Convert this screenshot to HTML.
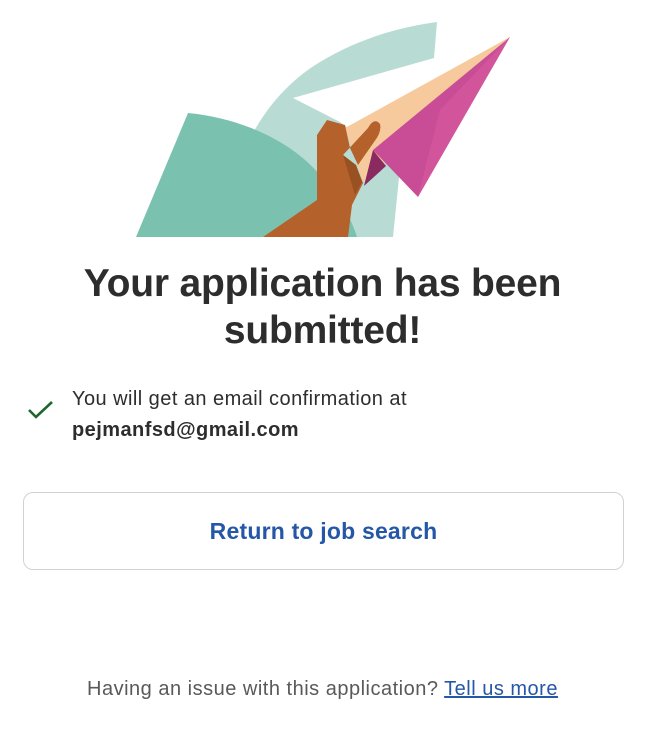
<!DOCTYPE html>
<html><head><meta charset="utf-8"><style>
body{margin:0;width:645px;height:736px;background:#fff;font-family:"Liberation Sans",sans-serif;position:relative;overflow:hidden}
svg.ill{position:absolute;left:0;top:0}
h1{position:absolute;left:0;width:645px;top:260px;margin:0;text-align:center;font-size:39px;line-height:47px;font-weight:bold;color:#2d2d2d;letter-spacing:-0.2px}
.chk{position:absolute;left:27px;top:399px}
.msg{position:absolute;left:72px;top:384px;font-size:20px;line-height:31px;color:#2d2d2d;letter-spacing:0.45px}
.btn{position:absolute;left:23px;top:492px;width:601px;height:78px;border:1px solid #d4d2d0;border-radius:10px;box-sizing:border-box;text-align:center;line-height:76px;font-size:23px;font-weight:bold;color:#2557a7;letter-spacing:0.2px}
.foot{position:absolute;left:0;width:645px;top:678px;text-align:center;font-size:20px;color:#595959;letter-spacing:0.5px}
.foot a{color:#2557a7;text-decoration:underline}
</style></head><body>
<svg class="ill" width="645" height="240" viewBox="0 0 645 240">
<path d="M437,22 L434,58 L293,98 L340,122 L400,168 L393,237 L225,237 C228,160 265,95 320,62 C360,38 400,27 437,22Z" fill="#b8dcd3"/>
<path d="M136,237 L188,113 C240,118 290,140 320,175 C338,196 350,215 357,237Z" fill="#7bc1af"/>
<path d="M345,128 L510,37 L363,182Z" fill="#f6ca9c"/>
<path d="M510,37 L373,150 L418,197Z" fill="#c94d96"/>
<path d="M510,37 L440,110 L418,197Z" fill="#e061a5" opacity="0.4"/>
<path d="M373,150 L364,186 L386,166Z" fill="#8a2a60"/>
<path d="M263,237 L348,237 L352,205 L363,183 L356,165 L343,155 L368,128 Q374,117 380,124 Q382,132 374,142 L358,165 L350,148 L345,125 L327,120 L317,135 L317,200Z" fill="#b5612c"/>
<path d="M343,155 L356,165 L362,182 L355,195Z" fill="#8f4a1e" opacity="0.7"/>
</svg>
<h1>Your application has been<br>submitted!</h1>
<svg class="chk" width="28" height="22" viewBox="0 0 28 22"><path d="M2,11 L9,18 L25,3" fill="none" stroke="#1f662c" stroke-width="2.6"/></svg>
<div class="msg">You will get an email confirmation at<br><b>pejmanfsd@gmail.com</b></div>
<div class="btn">Return to job search</div>
<div class="foot">Having an issue with this application? <a>Tell us more</a></div>
</body></html>
